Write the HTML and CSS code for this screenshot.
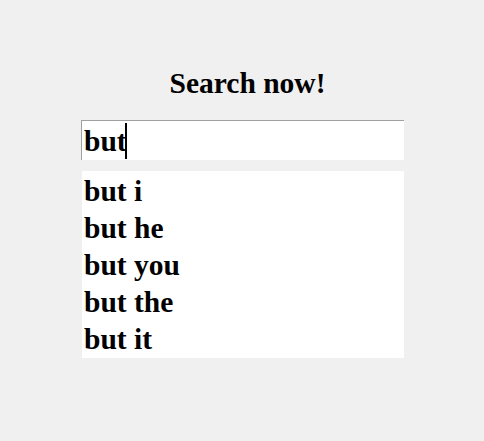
FILE: index.html
```html
<!DOCTYPE html>
<html>
<head>
<meta charset="utf-8">
<link rel="stylesheet" href="styles.css">
</head>
<body>
<div class="page">
  <h1 class="title">Search now!</h1>
  <div class="search">
    <div class="field"><span class="value">but</span><span class="caret"></span></div>
    <ul class="suggestions">
      <li>but i</li>
      <li>but he</li>
      <li>but you</li>
      <li>but the</li>
      <li>but it</li>
    </ul>
  </div>
</div>
</body>
</html>
```
FILE: styles.css
```css
html, body {
  margin: 0;
  padding: 0;
  background: #f0f0f0;
}
body {
  font-family: "Liberation Serif", "Times New Roman", serif;
  font-weight: bold;
  font-size: 29.5px;
  color: #000;
}
.page {
  width: 484px;
  height: 441px;
  padding-top: 66px;
  box-sizing: border-box;
}
.title {
  margin: 0;
  font-size: 29.5px;
  font-weight: bold;
  text-align: center;
  padding-left: 11px;
  line-height: 34px;
}
.search {
  width: 323px;
  margin: 20px 0 0 81px;
}
.field {
  height: 40px;
  box-sizing: border-box;
  background: #fff;
  border-top: 1px solid #a0a0a0;
  border-left: 1px solid #a0a0a0;
  padding-left: 2px;
  line-height: 38px;
  display: flex;
  align-items: center;
}
.caret {
  display: inline-block;
  width: 2px;
  height: 36px;
  background: #000;
  margin-left: -2px;
}
.suggestions {
  list-style: none;
  margin: 11px 0 0 1px;
  padding: 2px 0 0 2px;
  background: #fff;
}
.suggestions li {
  height: 37px;
  line-height: 37px;
}
```
